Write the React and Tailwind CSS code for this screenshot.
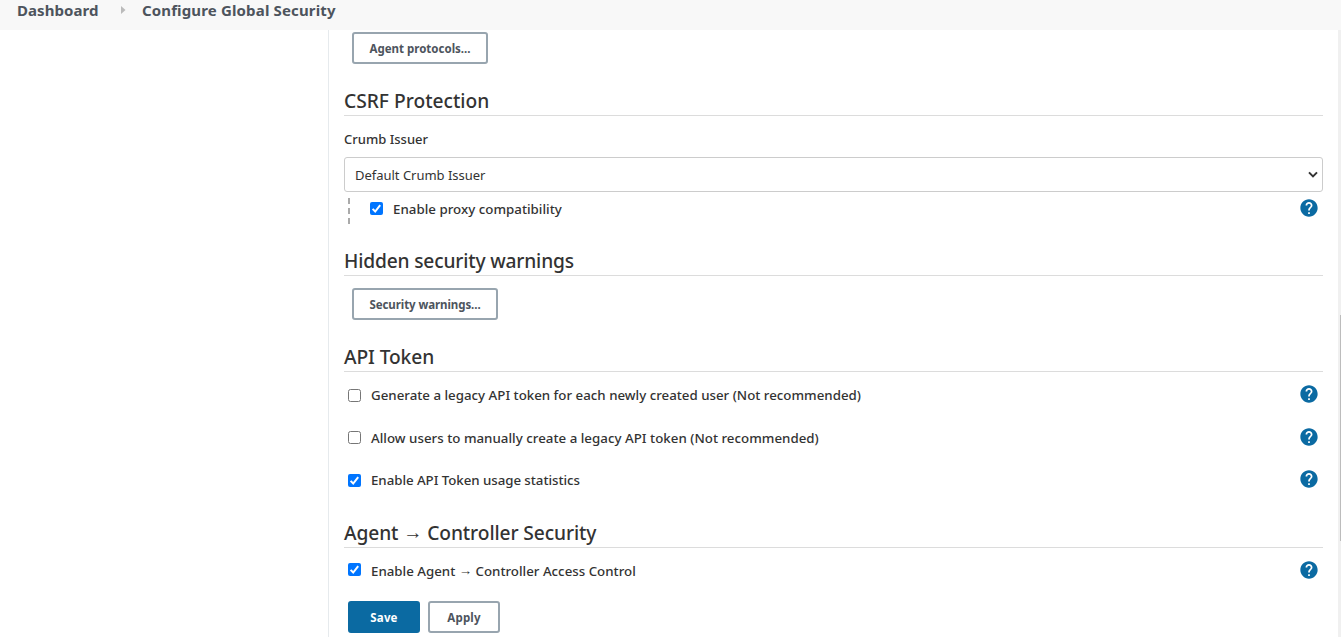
function Help() {
  return (
    <svg className="mr-[5px] h-[18px] w-[18px] shrink-0" viewBox="1.6 1.6 20.8 20.8" fill="#0b6aa2">
      <path d="M12 2C6.48 2 2 6.48 2 12s4.48 10 10 10 10-4.48 10-10S17.52 2 12 2zm1 17h-2v-2h2v2zm2.07-7.75l-.9.92C13.45 12.9 13 13.5 13 15h-2v-.5c0-1.1.45-2.1 1.17-2.83l1.24-1.26c.37-.36.59-.86.59-1.41 0-1.1-.9-2-2-2s-2 .9-2 2H8c0-2.21 1.79-4 4-4s4 1.79 4 4c0 .88-.36 1.68-.93 2.25z" />
    </svg>
  );
}

function Check({ checked, className = "" }) {
  return checked ? (
    <svg className={`h-[13px] w-[13px] shrink-0 ${className}`} viewBox="0 0 13 13">
      <rect width="13" height="13" rx="2" fill="#0075ff" />
      <path d="M2.6 6.9l2.6 2.6 5-6.3" fill="none" stroke="#fff" strokeWidth="2" />
    </svg>
  ) : (
    <span className={`h-[13px] w-[13px] shrink-0 rounded-[2.5px] border border-[#767676] bg-white ${className}`} />
  );
}

function Arrow() {
  return <span className="relative -top-px font-light">→</span>;
}

function Heading({ children, className = "", textClass = "" }) {
  return (
    <h2 className={`flex h-[30px] items-end border-b border-[#dcdcdc] text-[19.2px] leading-[28px] font-medium text-[#333] ${className}`}>
      <span className={`whitespace-nowrap ${textClass}`}>{children}</span>
    </h2>
  );
}

function Option({ label, checked, className = "", checkClass = "mt-[3px]", labelClass = "mt-px" }) {
  return (
    <div className={`flex h-[18px] items-start ${className}`}>
      <Check checked={checked} className={checkClass} />
      <span className={`ml-[10px] text-[13.3px] leading-[18px] whitespace-nowrap ${labelClass}`}>{label}</span>
      <span className="flex-1" />
      <Help />
    </div>
  );
}

function Button({ children, className = "", textClass = "" }) {
  return (
    <button className={`flex h-8 items-center justify-center rounded-[3px] border-2 pt-[2px] text-[11.5px] font-bold ${className}`}>
      <span className={`whitespace-nowrap ${textClass}`}>{children}</span>
    </button>
  );
}

export default function App() {
  return (
    <div className="flex h-[637px] w-[1341px] flex-col overflow-hidden bg-white font-['Noto_Sans',sans-serif] text-[13px] font-medium text-[#333]">
      <header className="flex h-[30px] shrink-0 bg-[#f8f8f8] pl-[17px] text-[15px] leading-[21px] font-bold text-[#4d545d]">
        <span className="tracking-[0.05px]">Dashboard</span>
        <svg className="mt-[6px] mr-[15.5px] ml-[23px] h-[8px] w-[5px]" viewBox="0 0 5 8">
          <path d="M0 0l4.5 4L0 8z" fill="#bbb" />
        </svg>
        <span className="tracking-[0.15px]">Configure Global Security</span>
      </header>
      <div className="flex flex-1">
        <aside className="w-[329px] shrink-0 border-r border-[#e6eaed]" />
        <main className="flex flex-1 flex-col pt-[2px] pr-[15px] pl-[15px]">
          <Button className="ml-2 w-[136px] border-[#98a5af] text-[#4d545d]">Agent protocols...</Button>
          <Heading className="mt-[22px]">CSRF Protection</Heading>
          <div className="mt-[13px] h-5 leading-5">Crumb Issuer</div>
          <div className="mt-[8px] flex h-[35px] items-center justify-between rounded-[3px] border border-[#ccc] pr-[4px] pl-[10px] font-normal">
            <span className="pt-[2px] tracking-[-0.02px]">Default Crumb Issuer</span>
            <svg className="h-[10px] w-[10px]" viewBox="0 0 10 10">
              <path d="M1 2.4l4 4 4-4" fill="none" stroke="#333" strokeWidth="2" />
            </svg>
          </div>
          <div className="mt-[6px] flex h-[26px] items-start">
            <svg className="ml-1 h-[26px] w-[2px]" viewBox="0 0 2 26">
              <path d="M0 0h2v6H0zM0 10h2v6H0zM0 20h2v6H0z" fill="#aaa" />
            </svg>
            <Option checked label="Enable proxy compatibility" className="mt-px ml-[20px] flex-1" labelClass="mt-px tracking-[0.02px]" />
          </div>
          <Heading className="mt-[22px]" textClass="tracking-[-0.17px]">Hidden security warnings</Heading>
          <Button className="mt-3 ml-2 w-[146px] border-[#98a5af] text-[#4d545d]" textClass="tracking-[-0.08px]">Security warnings...</Button>
          <Heading className="mt-[22px]" textClass="tracking-[-0.1px]">API Token</Heading>
          <Option label="Generate a legacy API token for each newly created user (Not recommended)" className="mt-[13px] ml-1" checkClass="mt-[4px]" />
          <Option label="Allow users to manually create a legacy API token (Not recommended)" className="mt-[25px] ml-1" labelClass="mt-px tracking-[0.02px]" />
          <Option checked label="Enable API Token usage statistics" className="mt-[24px] ml-1" checkClass="mt-[4px]" labelClass="mt-px tracking-[-0.05px]" />
          <Heading className="mt-[30px]" textClass="tracking-[-0.1px]">Agent <Arrow /> Controller Security</Heading>
          <Option checked label={<>Enable Agent <Arrow /> Controller Access Control</>} className="mt-[13px] ml-1" checkClass="mt-[2px]" />
          <div className="mt-[22px] ml-1 flex gap-2">
            <Button className="w-[72px] border-[#0b6aa2] bg-[#0b6aa2] text-white" textClass="tracking-[0.15px]">Save</Button>
            <Button className="w-[72px] border-[#98a5af] text-[#4d545d]" textClass="tracking-[0.2px]">Apply</Button>
          </div>
        </main>
        <div className="flex w-[3px] flex-col items-end bg-[#f0f0f0] pt-[285px]">
          <div className="h-[226px] w-px bg-[#bcbcbc]" />
        </div>
      </div>
    </div>
  );
}
